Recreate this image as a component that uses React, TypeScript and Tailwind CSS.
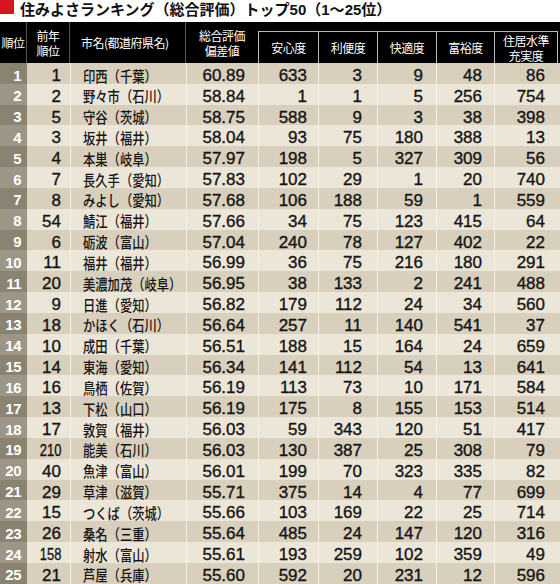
import React from "react";

type Row = [number, number, string, string, number, number, number, number, number];

const rows: Row[] = [
  [1, 1, "印西（千葉）", "60.89", 633, 3, 9, 48, 86],
  [2, 2, "野々市（石川）", "58.84", 1, 1, 5, 256, 754],
  [3, 5, "守谷（茨城）", "58.75", 588, 9, 3, 38, 398],
  [4, 3, "坂井（福井）", "58.04", 93, 75, 180, 388, 13],
  [5, 4, "本巣（岐阜）", "57.97", 198, 5, 327, 309, 56],
  [6, 7, "長久手（愛知）", "57.83", 102, 29, 1, 20, 740],
  [7, 8, "みよし（愛知）", "57.68", 106, 188, 59, 1, 559],
  [8, 54, "鯖江（福井）", "57.66", 34, 75, 123, 415, 64],
  [9, 6, "砺波（富山）", "57.04", 240, 78, 127, 402, 22],
  [10, 11, "福井（福井）", "56.99", 36, 75, 216, 180, 291],
  [11, 20, "美濃加茂（岐阜）", "56.95", 38, 133, 2, 241, 488],
  [12, 9, "日進（愛知）", "56.82", 179, 112, 24, 34, 560],
  [13, 18, "かほく（石川）", "56.64", 257, 11, 140, 541, 37],
  [14, 10, "成田（千葉）", "56.51", 188, 15, 164, 24, 659],
  [15, 14, "東海（愛知）", "56.34", 141, 112, 54, 13, 641],
  [16, 16, "鳥栖（佐賀）", "56.19", 113, 73, 10, 171, 584],
  [17, 13, "下松（山口）", "56.19", 175, 8, 155, 153, 514],
  [18, 17, "敦賀（福井）", "56.03", 59, 343, 120, 51, 417],
  [19, 210, "能美（石川）", "56.03", 130, 387, 25, 308, 79],
  [20, 40, "魚津（富山）", "56.01", 199, 70, 323, 335, 82],
  [21, 29, "草津（滋賀）", "55.71", 375, 14, 4, 77, 699],
  [22, 15, "つくば（茨城）", "55.66", 103, 169, 22, 25, 714],
  [23, 26, "桑名（三重）", "55.64", 485, 24, 147, 120, 316],
  [24, 158, "射水（富山）", "55.61", 193, 259, 102, 359, 49],
  [25, 21, "芦屋（兵庫）", "55.60", 592, 20, 231, 12, 596],
];

const cols = "grid grid-cols-[27px_43px_116px_72px_60px_59px_59px_58px_66px]";
const jp = "font-['Noto_Sans_CJK_JP',sans-serif]";
const num = "font-['Liberation_Sans',Arial,sans-serif]";
const heavy = "[-webkit-text-stroke:0.35px_currentColor]";

function HeadLabel({ lines }: { lines: string[] }) {
  return (
    <div className="flex flex-col items-center justify-center leading-[15px] text-[12px] tracking-[-0.5px] text-white">
      {lines.map((l) => (
        <span key={l}>{l}</span>
      ))}
    </div>
  );
}

export default function App() {
  return (
    <div className={`w-[560px] h-[584px] bg-white overflow-hidden ${jp}`}>
      {/* title */}
      <div className="flex items-start gap-[6px] h-[22px]">
        <div className="w-[14px] h-[14px] bg-[#d4171e]" />
        <div className="text-[15px] font-bold leading-[18px] text-[#111] whitespace-nowrap">
          住みよさランキング（総合評価）トップ<span className={num}>50</span>（<span className={num}>1</span>～<span className={num}>25</span>位）
        </div>
      </div>

      {/* header */}
      <div className={`${cols} h-[41px] bg-black`}>
        <div className="flex items-center justify-center border-r border-[#555]">
          <HeadLabel lines={["順位"]} />
        </div>
        <div className="flex items-center justify-center border-r border-[#555]">
          <HeadLabel lines={["前年", "順位"]} />
        </div>
        <div className="flex items-center pl-[11px] border-r border-[#555]">
          <HeadLabel lines={["市名(都道府県名)"]} />
        </div>
        <div className="flex items-center justify-center">
          <HeadLabel lines={["総合評価", "偏差値"]} />
        </div>
        {[["安心度"], ["利便度"], ["快適度"], ["富裕度"], ["住居水準", "充実度"]].map((l, i) => (
          <div key={i} className="pt-[9px] flex">
            <div className={`flex-1 flex items-center justify-center border-t border-l border-[#bbb] ${i === 4 ? "mr-[2px] border-r" : ""}`}>
              <HeadLabel lines={l} />
            </div>
          </div>
        ))}
      </div>

      {/* rows */}
      {rows.map((r, i) => {
        const odd = i % 2 === 0;
        const bg = odd ? "bg-[#d8cfbd]" : "bg-[#ece6d9]";
        const cell = `flex items-center justify-end border-l border-[#f4f0e8] ${bg} ${heavy}`;
        return (
          <div key={r[0]} className={`${cols} h-[20.84px] text-[17px] text-[#151515] ${num}`}>
            <div className={`flex items-center justify-end pr-[6px] font-bold text-[15px] text-white tracking-[-0.5px] ${odd ? "bg-[#8a8372]" : "bg-[#9d9686]"}`}>
              {r[0]}
            </div>
            <div className={`flex items-center justify-end pr-[9px] ${bg} ${heavy}`}>
              <span className={`inline-block ${r[1] >= 100 ? "scale-x-[0.76] origin-right" : ""}`}>{r[1]}</span>
            </div>
            <div className={`flex items-center pl-[12px] border-l border-[#f4f0e8] ${bg} ${jp}`}>
              <span className="inline-block whitespace-nowrap text-[15px] font-medium scale-x-[0.82] origin-left">{r[2]}</span>
            </div>
            <div className={`${cell} pr-[13px]`}>{r[3]}</div>
            <div className={`${cell} pr-[11px]`}>{r[4]}</div>
            <div className={`${cell} pr-[15px]`}>{r[5]}</div>
            <div className={`${cell} pr-[13px]`}>{r[6]}</div>
            <div className={`${cell} pr-[12px]`}>{r[7]}</div>
            <div className={`${cell} pr-[15px]`}>{r[8]}</div>
          </div>
        );
      })}
    </div>
  );
}
